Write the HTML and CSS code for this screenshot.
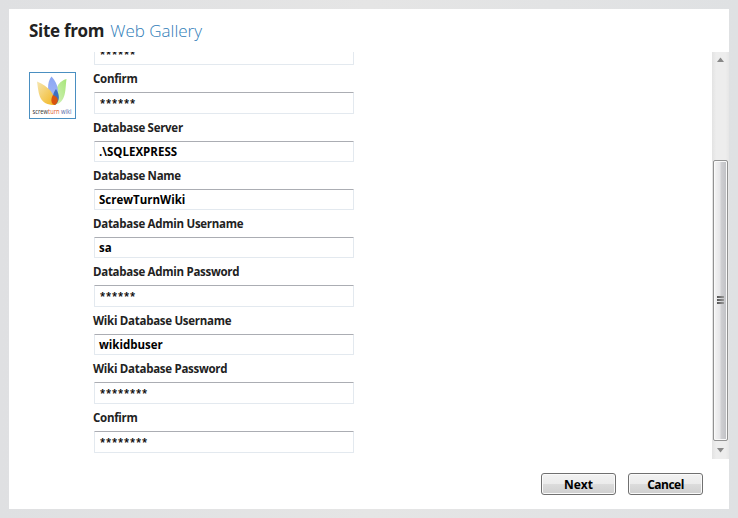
FILE: index.html
```html
<!DOCTYPE html>
<html lang="en">
<head>
<meta charset="utf-8">
<title>Site from Web Gallery</title>
<link rel="stylesheet" href="styles.css">
</head>
<body>
<main class="dialog">
  <h1 class="title"><span class="title-main">Site from</span><span class="title-sub">Web Gallery</span></h1>
  <section class="pane">
    <div class="logo">
      <svg width="45" height="45" viewBox="0 0 45 45">
        <defs>
          <linearGradient id="y" x1="0" y1="0" x2="1" y2="1"><stop offset="0" stop-color="#f6e6b0"/><stop offset="1" stop-color="#f2b51d"/></linearGradient>
          <linearGradient id="g" x1="1" y1="0" x2="0" y2="1"><stop offset="0" stop-color="#a6e578"/><stop offset="1" stop-color="#d8f3c0"/></linearGradient>
          <linearGradient id="b" x1="0" y1="0" x2="0" y2="1"><stop offset="0" stop-color="#8ba6f2"/><stop offset="1" stop-color="#a9bbf8"/></linearGradient>
        </defs>
        <path d="M36.500 6C27 9 25 16 24 32C37 30 35 16 36.500 6Z" fill="url(#g)"/>
        <path d="M21.500 3.500C17 9 16 20 24 32C31 21 28 10 21.500 3.500Z" fill="url(#b)"/>
        <path d="M7 8.500C19 14 25 20 25 32C9 32 9 22 7 8.500Z" fill="url(#y)"/>
        <path d="M26 16C22 21 22 27 25 32C30 28 30 22 26 16Z" fill="#3d6fc0"/>
        <path d="M23 22C29 24 29 29 25 32C20 31 21 25 23 22Z" fill="#d9540e"/>
        <text class="logo-text" x="2.500" y="40.500" textLength="39" lengthAdjust="spacingAndGlyphs">screw<tspan fill="#dc5a2b">turn</tspan> <tspan fill="#5268a6">wiki</tspan></text>
      </svg>
    </div>
    <form class="form">
      <div class="field secret">******</div>
      <label class="label">Confirm</label>
      <div class="field secret">******</div>
      <label class="label">Database Server</label>
      <div class="field">.\SQLEXPRESS</div>
      <label class="label">Database Name</label>
      <div class="field">ScrewTurnWiki</div>
      <label class="label">Database Admin Username</label>
      <div class="field">sa</div>
      <label class="label">Database Admin Password</label>
      <div class="field secret">******</div>
      <label class="label">Wiki Database Username</label>
      <div class="field">wikidbuser</div>
      <label class="label">Wiki Database Password</label>
      <div class="field secret">********</div>
      <label class="label">Confirm</label>
      <div class="field secret">********</div>
    </form>
    <div class="scrollbar">
      <svg class="arrow" width="17" height="17"><path d="M8.500 5.500L12 10H5Z" fill="#888"/></svg>
      <div class="thumb"><i></i><i></i><i></i></div>
      <svg class="arrow" width="17" height="17"><path d="M5 6H12L8.500 10.500Z" fill="#888"/></svg>
    </div>
  </section>
  <footer class="actions"><button class="button">Next</button><button class="button cancel">Cancel</button></footer>
</main>
</body>
</html>
```

FILE: styles.css
```css
* { box-sizing: border-box; }
body {
  margin: 0;
  height: 518px;
  padding: 9px;
  overflow: hidden;
  background: linear-gradient(90deg, #dfe0e2, #e5e5e5 50%, #dfe1e3);
  font-family: "Open Sans", "Noto Sans", sans-serif;
}
.dialog { width: 720px; height: 500px; background: #fff; display: flex; flex-direction: column; }
.title {
  display: flex;
  gap: 6px;
  height: 43px;
  margin: 0;
  padding-left: 20px;
  font-size: 17px;
  line-height: 44px;
}
.title-main { color: #222; font-weight: 700; letter-spacing: -0.3px; }
.title-sub { color: #2f7db8; font-weight: 300; letter-spacing: 0; }
.pane { display: flex; height: 407px; overflow: hidden; }
.logo { width: 47px; height: 47px; margin: 20px 18px 0 20px; border: 1px solid #4a8fc1; }
.logo svg { display: block; }
.logo-text { font: 6.5px "Open Sans", sans-serif; fill: #333; }
.form { width: 260px; margin-top: -9px; }
.label {
  display: block;
  height: 27px;
  margin-left: -1px;
  line-height: 27px;
  font-size: 11.5px;
  font-weight: 700;
  letter-spacing: -0.28px;
  color: #222;
}
.field {
  height: 21px;
  padding-left: 4px;
  border: 1px solid #e3e9ef;
  border-top-color: #abadb3;
  border-radius: 1px;
  font-size: 11.5px;
  font-weight: 700;
  line-height: 20px;
  letter-spacing: 0;
  color: #000;
}
.secret {
  height: 22px;
  padding-left: 4px;
  font-family: "Liberation Mono", monospace;
  font-size: 12px;
  font-weight: 400;
  line-height: 25px;
  letter-spacing: -1.2px;
  -webkit-text-stroke: 0.25px #000;
}
.scrollbar {
  display: flex;
  flex-direction: column;
  width: 17px;
  margin-left: auto;
  background: linear-gradient(90deg, #e3e3e3, #ededed 25%, #ededed 80%, #e6e6e6);
}
.arrow { display: block; flex: none; }
.thumb {
  display: flex;
  flex-direction: column;
  align-items: center;
  justify-content: center;
  gap: 1px;
  width: 15px;
  height: 281px;
  margin: 91px 1px 1px;
  padding-bottom: 2px;
  border: 1px solid #929292;
  border-radius: 2px;
  box-shadow: inset 0 0 0 1px #fafafa;
  background: linear-gradient(90deg, #f5f5f5, #e6e6e8 45%, #cfcfd2 55%, #bfc0c4);
}
.thumb i { width: 7px; height: 2px; background: linear-gradient(90deg, #555, #999); }
.actions { display: flex; gap: 12px; padding: 14px 0 0 532px; }
.button {
  width: 75px;
  height: 22px;
  padding: 0;
  border: 1px solid #707070;
  border-radius: 3px;
  box-shadow: inset 0 0 0 1px #fafafa;
  background: linear-gradient(#f2f2f2, #ebebeb 50%, #dcdcdc 50%, #cfcfcf);
  font: 700 12px/22px "Open Sans", sans-serif;
  color: #000;
}
.cancel { letter-spacing: -0.5px; }
```
